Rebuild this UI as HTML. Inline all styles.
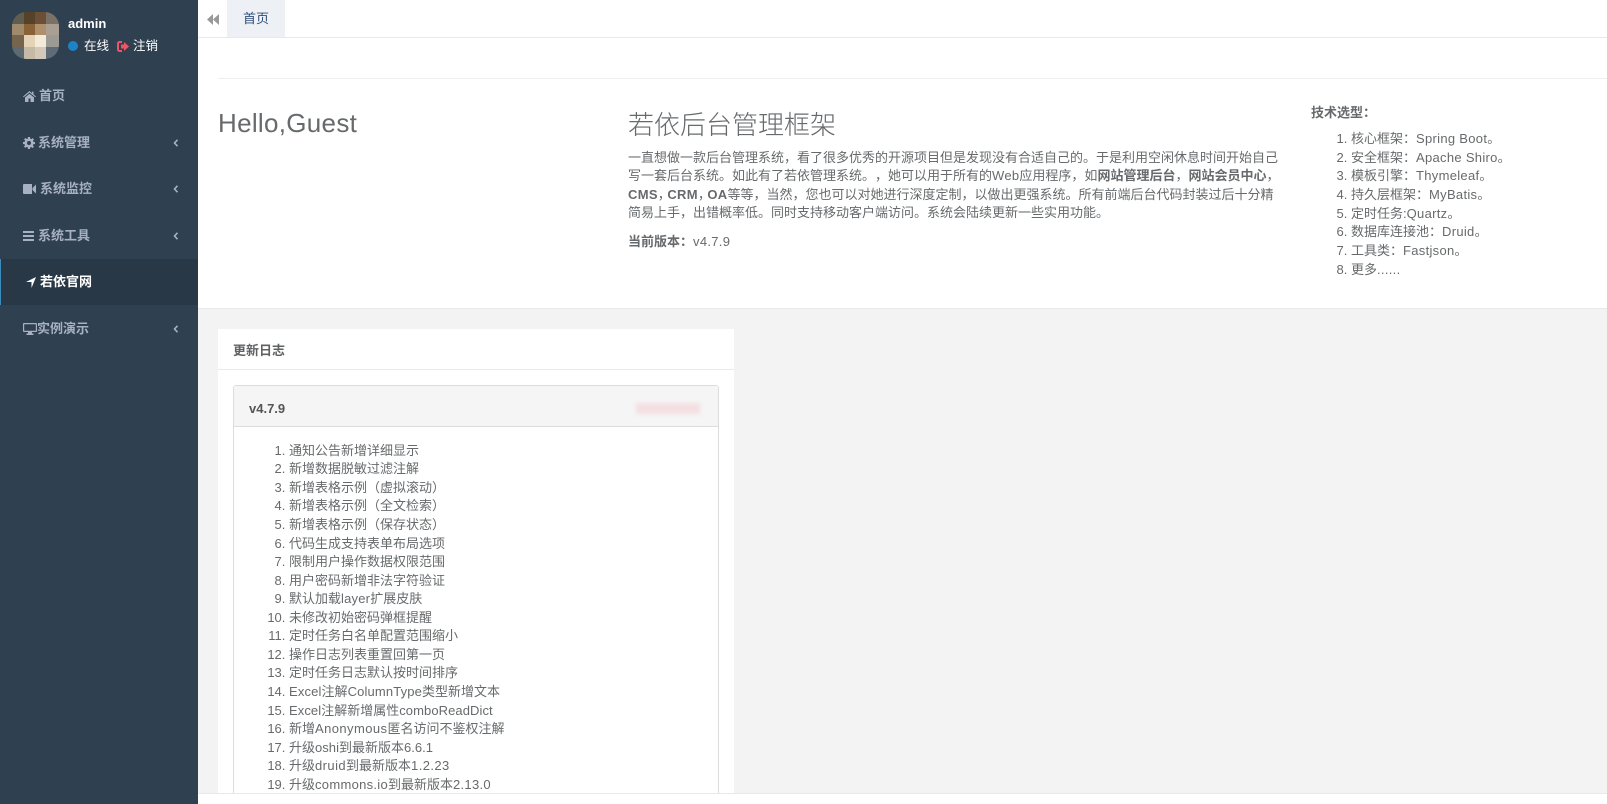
<!DOCTYPE html>
<html lang="zh">
<head>
<meta charset="utf-8">
<title>若依后台管理框架</title>
<style>
html,body{margin:0;padding:0;width:1607px;height:804px;overflow:hidden;background:#f3f3f4}
body{font-family:"Liberation Sans","Noto Sans CJK SC",sans-serif;font-size:13px;color:#676a6c;position:relative;text-spacing-trim:space-all}
.a{position:absolute;white-space:nowrap}
.side{position:absolute;left:0;top:0;width:198px;height:804px;background:#2f4050}
.m{position:absolute;white-space:nowrap;color:#a7b1c2;font-weight:600;line-height:20px;font-size:13px}
.ch{position:absolute;left:173px}
svg{display:block;position:absolute}
.l{position:absolute;white-space:nowrap;line-height:18.57px}
ol{position:absolute;margin:0;padding:0 0 0 40px;line-height:18.57px;white-space:nowrap}
ol span{letter-spacing:.3px}
.lat{letter-spacing:.3px}
.c{letter-spacing:-3.5px}
</style>
</head>
<body>
<div class="side"></div>

<!-- avatar -->
<div class="a" style="left:12px;top:12px;width:47px;height:47px;border-radius:14px;overflow:hidden;display:grid;grid-template-columns:12px 11px 11px 13px;grid-template-rows:12px 11px 12px 12px">
<i style="background:#5f5c52"></i><i style="background:#564129"></i><i style="background:#6b4f36"></i><i style="background:#7a7266"></i>
<i style="background:#a08a6c"></i><i style="background:#8a6238"></i><i style="background:#b08f6c"></i><i style="background:#a9a093"></i>
<i style="background:#75644e"></i><i style="background:#e5d3b8"></i><i style="background:#f3ead9"></i><i style="background:#9c9a94"></i>
<i style="background:#5f6a70"></i><i style="background:#c5baa5"></i><i style="background:#d2c9b8"></i><i style="background:#5f6c78"></i>
</div>
<div class="a" style="left:68px;top:14px;line-height:20px;color:#fff;font-weight:700">admin</div>
<div class="a" style="left:68px;top:41px;width:10px;height:10px;border-radius:50%;background:#1c84c6"></div>
<div class="a" style="left:84px;top:36px;line-height:20px;color:#fff;font-size:12.5px">在线</div>
<svg style="left:117px;top:41px" width="12" height="11" viewBox="0 0 12 11"><path d="M5 1H2.500A1.500 1.500 0 0 0 1 2.500V8.500A1.500 1.500 0 0 0 2.500 10H5" fill="none" stroke="#ed5565" stroke-width="2"/><path d="M4 3.500h3V1L12 5.500 7 10V7.500H4z" fill="#ed5565"/></svg>
<div class="a" style="left:133px;top:36px;line-height:20px;color:#fff;font-size:12.5px">注销</div>

<!-- menu -->
<svg style="left:23px;top:91px" width="13" height="11" viewBox="0 0 13 11"><path d="M6.500 0 0 5.500l.7.800L6.500 1.500l5.800 4.800.7-.8L10.500 3.400V.6H9V2.100zM2 6.500V11h3.500V7.500h2V11H11V6.500L6.500 2.700z" fill="#a7b1c2"/></svg>
<div class="m" style="left:39px;top:86px">首页</div>

<svg style="left:23px;top:137px" width="12" height="12" viewBox="0 0 12 12"><path fill-rule="evenodd" d="M5 0h2l.3 1.700 1 .4L9.700 1.100 11 2.400 10 3.800l.4 1 1.600.3v1.900l-1.700.3-.4 1L10.900 9.700 9.600 11 8.200 10l-1 .4L7 12H5l-.3-1.700-1-.4L2.300 10.900 1 9.600 2 8.200l-.4-1L0 7V5l1.700-.3.400-1L1.100 2.300 2.400 1l1.400 1 1-.4zM6 4a2 2 0 1 0 0 4 2 2 0 0 0 0-4z" fill="#a7b1c2"/></svg>
<div class="m" style="left:38px;top:133px">系统管理</div>
<svg class="ch" style="top:139px" width="6" height="8" viewBox="0 0 6 8"><path d="M4.500 .8 1.500 4 4.500 7.200" fill="none" stroke="#a7b1c2" stroke-width="1.600"/></svg>

<svg style="left:23px;top:183px" width="13" height="12" viewBox="0 0 13 12"><path d="M1 1h8v10H1a1 1 0 0 1-1-1V2a1 1 0 0 1 1-1zM9.500 5 13 1.500v9L9.500 7z" fill="#a7b1c2"/></svg>
<div class="m" style="left:40px;top:179px">系统监控</div>
<svg class="ch" style="top:185px" width="6" height="8" viewBox="0 0 6 8"><path d="M4.500 .8 1.500 4 4.500 7.200" fill="none" stroke="#a7b1c2" stroke-width="1.600"/></svg>

<svg style="left:23px;top:231px" width="11" height="10" viewBox="0 0 11 10"><path d="M0 0h11v2H0zM0 4h11v2H0zM0 8h11v2H0z" fill="#a7b1c2"/></svg>
<div class="m" style="left:38px;top:226px">系统工具</div>
<svg class="ch" style="top:232px" width="6" height="8" viewBox="0 0 6 8"><path d="M4.500 .8 1.500 4 4.500 7.200" fill="none" stroke="#a7b1c2" stroke-width="1.600"/></svg>

<div class="a" style="left:0;top:259px;width:198px;height:46px;background:#293846"></div>
<div class="a" style="left:0;top:259px;width:1px;height:46px;background:#3c8dbc"></div>
<svg style="left:26px;top:277px" width="10" height="11" viewBox="0 0 10 11"><path d="M10 0 5.500 11V5H0z" fill="#fff"/></svg>
<div class="m" style="left:40px;top:272px;color:#fff;font-weight:700">若依官网</div>

<svg style="left:23px;top:323px" width="14" height="12" viewBox="0 0 14 12"><path fill-rule="evenodd" d="M1 0h12a1 1 0 0 1 1 1v7a1 1 0 0 1-1 1H9v1.500h1.500V12h-7v-1.500H5V9H1a1 1 0 0 1-1-1V1a1 1 0 0 1 1-1zm.2 1.200v6.600h11.600V1.200z" fill="#a7b1c2"/></svg>
<div class="m" style="left:37px;top:319px">实例演示</div>
<svg class="ch" style="top:325px" width="6" height="8" viewBox="0 0 6 8"><path d="M4.500 .8 1.500 4 4.500 7.200" fill="none" stroke="#a7b1c2" stroke-width="1.600"/></svg>

<!-- top tab bar -->
<div class="a" style="left:198px;top:0;width:1409px;height:37px;background:#fff;border-bottom:1px solid #e7eaec"></div>
<svg style="left:207px;top:14px" width="12" height="11" viewBox="0 0 12 11"><path d="M6 0v11L0 5.500zM12 0v11L6 5.500z" fill="#999"/></svg>
<div class="a" style="left:227px;top:0;width:58px;height:37px;background:#edf1f6;color:#2f4d7a;line-height:38px;text-align:center">首页</div>

<!-- intro section -->
<div class="a" style="left:198px;top:38px;width:1409px;height:270px;background:#fff;border-bottom:1px solid #e7eaec"></div>
<div class="a" style="left:218px;top:78px;width:1389px;height:1px;background:#eee"></div>
<div class="a" style="left:218px;top:104px;font-size:26px;line-height:38px;font-weight:300;letter-spacing:.3px">Hello,Guest</div>
<div class="a" style="left:628px;top:106px;font-size:26px;line-height:38px;font-weight:300">若依后台管理框架</div>
<div class="l" style="left:628px;top:149px">一直想做一款后台管理系统，看了很多优秀的开源项目但是发现没有合适自己的。于是利用空闲休息时间开始自己</div>
<div class="l" style="left:628px;top:167px">写一套后台系统。如此有了若依管理系统。，她可以用于所有的<span class="lat">Web</span>应用程序，如<b>网站管理后台</b>，<b>网站会员中心</b>，</div>
<div class="l" style="left:628px;top:186px"><b class="lat">CMS</b><span class="c">，</span><b class="lat">CRM</b><span class="c">，</span><b class="lat">OA</b>等等，当然，您也可以对她进行深度定制，以做出更强系统。所有前端后台代码封装过后十分精</div>
<div class="l" style="left:628px;top:204px">简易上手，出错概率低。同时支持移动客户端访问。系统会陆续更新一些实用功能。</div>
<div class="l" style="left:628px;top:233px"><b>当前版本：</b><span class="lat">v4.7.9</span></div>

<div class="l" style="left:1311px;top:104px"><b>技术选型：</b></div>
<ol style="left:1311px;top:130px;line-height:18.67px">
<li>核心框架：<span>Spring Boot</span>。</li>
<li>安全框架：<span>Apache Shiro</span>。</li>
<li>模板引擎：<span>Thymeleaf</span>。</li>
<li>持久层框架：<span>MyBatis</span>。</li>
<li>定时任务:<span>Quartz</span>。</li>
<li>数据库连接池：<span>Druid</span>。</li>
<li>工具类：<span>Fastjson</span>。</li>
<li>更多<span>......</span></li>
</ol>

<!-- changelog card -->
<div class="a" style="left:218px;top:329px;width:516px;height:464px;background:#fff"></div>
<div class="a" style="left:218px;top:369px;width:516px;height:1px;background:#e7eaec"></div>
<div class="a" style="left:233px;top:341px;line-height:20px;font-weight:700;color:#5f6264">更新日志</div>
<div class="a" style="left:233px;top:385px;width:484px;height:420px;border:1px solid #ddd;border-radius:3px;background:#fff"></div>
<div class="a" style="left:234px;top:386px;width:484px;height:40px;background:#f5f5f5;border-bottom:1px solid #ddd;border-radius:3px 3px 0 0"></div>
<div class="a" style="left:249px;top:399px;line-height:20px;font-weight:700;color:#555;font-size:13px">v4.7.9</div>
<div class="a" style="left:636px;top:403px;width:64px;height:11px;background:#f3dfe2;filter:blur(2px)"></div>

<ol style="left:249px;top:441.700px">
<li>通知公告新增详细显示</li>
<li>新增数据脱敏过滤注解</li>
<li>新增表格示例（虚拟滚动）</li>
<li>新增表格示例（全文检索）</li>
<li>新增表格示例（保存状态）</li>
<li>代码生成支持表单布局选项</li>
<li>限制用户操作数据权限范围</li>
<li>用户密码新增非法字符验证</li>
<li>默认加载<span style="letter-spacing:.2px">layer</span>扩展皮肤</li>
<li>未修改初始密码弹框提醒</li>
<li>定时任务白名单配置范围缩小</li>
<li>操作日志列表重置回第一页</li>
<li>定时任务日志默认按时间排序</li>
<li><span style="letter-spacing:.15px">Excel</span>注解<span style="letter-spacing:.15px">ColumnType</span>类型新增文本</li>
<li><span style="letter-spacing:.08px">Excel</span>注解新增属性<span style="letter-spacing:.08px">comboReadDict</span></li>
<li>新增<span style="letter-spacing:.42px">Anonymous</span>匿名访问不鉴权注解</li>
<li>升级<span style="letter-spacing:.03px">oshi</span>到最新版本<span style="letter-spacing:.03px">6.6.1</span></li>
<li>升级<span style="letter-spacing:.42px">druid</span>到最新版本<span style="letter-spacing:.42px">1.2.23</span></li>
<li>升级<span style="letter-spacing:.29px">commons.io</span>到最新版本<span style="letter-spacing:.29px">2.13.0</span></li>
</ol>

<!-- footer -->
<div class="a" style="left:198px;top:793px;width:1409px;height:11px;background:#fff;border-top:1px solid #e7eaec"></div>
</body>
</html>
